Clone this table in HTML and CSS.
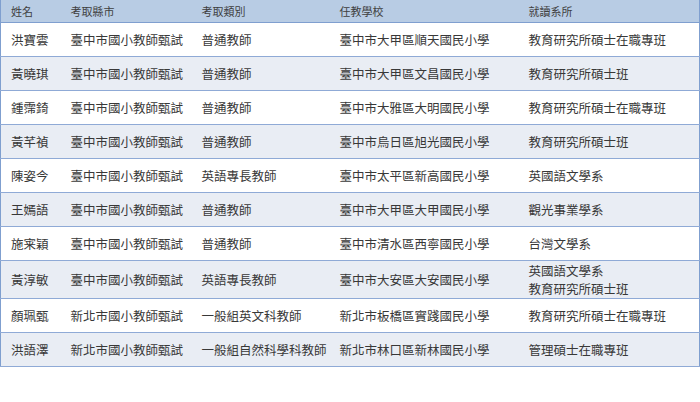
FILE: index.html
```html
<!DOCTYPE html>
<html lang="zh-Hant">
<head>
<meta charset="utf-8">
<link rel="stylesheet" href="styles.css">
</head>
<body>
<table class="roster">
  <colgroup>
    <col class="c1"><col class="c2"><col class="c3"><col class="c4"><col class="c5">
  </colgroup>
  <thead>
    <tr><th>姓名</th><th>考取縣市</th><th>考取類別</th><th>任教學校</th><th>就讀系所</th></tr>
  </thead>
  <tbody>
    <tr><td>洪寶雲</td><td>臺中市國小教師甄試</td><td>普通教師</td><td>臺中市大甲區順天國民小學</td><td>教育研究所碩士在職專班</td></tr>
    <tr><td>黃曉琪</td><td>臺中市國小教師甄試</td><td>普通教師</td><td>臺中市大甲區文昌國民小學</td><td>教育研究所碩士班</td></tr>
    <tr><td>鍾霈錡</td><td>臺中市國小教師甄試</td><td>普通教師</td><td>臺中市大雅區大明國民小學</td><td>教育研究所碩士在職專班</td></tr>
    <tr><td>黃芊禎</td><td>臺中市國小教師甄試</td><td>普通教師</td><td>臺中市烏日區旭光國民小學</td><td>教育研究所碩士班</td></tr>
    <tr><td>陳姿今</td><td>臺中市國小教師甄試</td><td>英語專長教師</td><td>臺中市太平區新高國民小學</td><td>英國語文學系</td></tr>
    <tr><td>王嫣語</td><td>臺中市國小教師甄試</td><td>普通教師</td><td>臺中市大甲區大甲國民小學</td><td>觀光事業學系</td></tr>
    <tr><td>施宷穎</td><td>臺中市國小教師甄試</td><td>普通教師</td><td>臺中市清水區西寧國民小學</td><td>台灣文學系</td></tr>
    <tr class="tall"><td>黃淳敏</td><td>臺中市國小教師甄試</td><td>英語專長教師</td><td>臺中市大安區大安國民小學</td><td>英國語文學系<br>教育研究所碩士班</td></tr>
    <tr><td>顏珮甄</td><td>新北市國小教師甄試</td><td>一般組英文科教師</td><td>新北市板橋區實踐國民小學</td><td>教育研究所碩士在職專班</td></tr>
    <tr><td>洪語澤</td><td>新北市國小教師甄試</td><td>一般組自然科學科教師</td><td>新北市林口區新林國民小學</td><td>管理碩士在職專班</td></tr>
  </tbody>
</table>
</body>
</html>
```
FILE: styles.css
```css
html, body {
  margin: 0;
  padding: 0;
  background: #ffffff;
}
body {
  font-family: "Noto Sans CJK TC", "Noto Sans", sans-serif;
  color: #383838;
}
.roster {
  width: 699px;
  border-collapse: collapse;
  table-layout: fixed;
  border-left: 1px solid #7f9fcf;
  border-right: 1px solid #7f9fcf;
  border-bottom: 1px solid #9db6da;
}
.c1 { width: 60px; }
.c2 { width: 131px; }
.c3 { width: 138px; }
.c4 { width: 189px; }
.c5 { width: 181px; }
.roster th {
  height: 22px;
  padding: 0 0 0 10px;
  background: #b8cce4;
  font-size: 11px;
  font-weight: normal;
  text-align: left;
  color: #3f3f3f;
  border-bottom: 1px solid #7f9fcf;
  line-height: 14px;
}
.roster td {
  height: 33px;
  padding: 0 0 0 10px;
  font-size: 12.5px;
  line-height: 16px;
  white-space: nowrap;
  border-bottom: 1px solid #8faad6;
  vertical-align: middle;
}
.roster tbody tr:nth-child(even) td {
  background: #e9edf4;
}
.roster tr.tall td {
  height: 37px;
  line-height: 18px;
}
```
